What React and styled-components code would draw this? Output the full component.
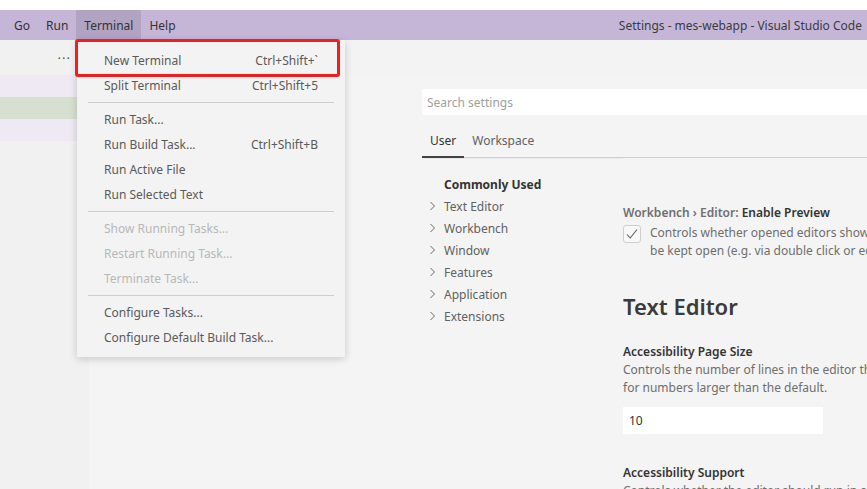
import styled, { createGlobalStyle } from "styled-components"

const GlobalStyle = createGlobalStyle`
  html, body {
    margin: 0;
    padding: 0;
    background: #ffffff;
  }
  body {
    font-family: "Noto Sans", "Open Sans", sans-serif;
    font-size: 12px;
    color: #333333;
  }
`

const Window = styled.div`
  position: relative;
  width: 867px;
  height: 489px;
  overflow: hidden;
  padding-top: 10px;
  box-sizing: border-box;
  display: flex;
  flex-direction: column;
`

const TitleBar = styled.div`
  height: 30px;
  background: #c5b6d8;
  display: flex;
  align-items: stretch;
  padding-left: 6px;
  flex-shrink: 0;
`

const MenuEntry = styled.div`
  display: flex;
  align-items: center;
  padding: 0 8px;
  color: #333333;
  font-size: 12px;
  background: ${(p) => (p.$active ? "#b1a3c2" : "transparent")};
`

const Title = styled.div`
  margin-left: auto;
  display: flex;
  align-items: center;
  padding-right: 5px;
  font-size: 12px;
  color: #3b3b3b;
`

const Body = styled.div`
  flex: 1;
  display: flex;
  min-height: 0;
`

const Sidebar = styled.div`
  width: 89px;
  background: #f1f1f1;
  display: flex;
  flex-direction: column;
  flex-shrink: 0;
`

const SidebarHeader = styled.div`
  height: 35px;
  display: flex;
  justify-content: flex-end;
  align-items: center;
  padding-right: 18px;
  color: #555555;
  font-size: 13px;
  letter-spacing: 1px;
`

const TreeRow = styled.div`
  height: 22px;
  background: ${(p) => p.$color};
`

const Editor = styled.div`
  flex: 1;
  background: #f4f4f4;
  display: flex;
  flex-direction: column;
  min-width: 0;
`

const TabStrip = styled.div`
  height: 35px;
  background: #f3f3f3;
  flex-shrink: 0;
`

const Settings = styled.div`
  padding-left: 333px;
  padding-top: 14px;
  display: flex;
  flex-direction: column;
`

const SearchBox = styled.div`
  height: 26px;
  background: #ffffff;
  display: flex;
  align-items: center;
  padding-left: 5px;
  color: #a0a0a0;
  font-size: 12px;
`

const Tabs = styled.div`
  margin-top: 10px;
  height: 32px;
  display: flex;
  border-bottom: 1px solid #cfcfcf;
`

const Tab = styled.div`
  display: flex;
  align-items: center;
  padding: 0 8px;
  font-size: 12px;
  color: ${(p) => (p.$active ? "#333333" : "#616161")};
  border-bottom: 2px solid ${(p) => (p.$active ? "#424242" : "transparent")};
  margin-bottom: -1px;
`

const SettingsBody = styled.div`
  display: flex;
`

const Toc = styled.div`
  width: 201px;
  flex-shrink: 0;
  padding-top: 14px;
  border-top: 1px solid #eaeaea;
`

const TocItem = styled.div`
  height: 22px;
  display: flex;
  align-items: center;
  padding-left: ${(p) => (p.$bold ? "22px" : "6px")};
  gap: 7px;
  font-size: 12px;
  font-weight: ${(p) => (p.$bold ? 700 : 400)};
  color: ${(p) => (p.$bold ? "#333333" : "#616161")};
`

const Content = styled.div`
  padding-top: 44px;
  white-space: nowrap;
  display: flex;
  flex-direction: column;
`

const SettingTitle = styled.div`
  font-size: 12px;
  font-weight: 600;
  color: #333333;
  height: 20px;
  display: flex;
  align-items: center;
`

const Category = styled.span`
  color: #6f6f6f;
  white-space: pre;
`

const CheckRow = styled.div`
  display: flex;
  gap: 9px;
  margin-top: 2px;
`

const CheckBox = styled.div`
  width: 16px;
  height: 16px;
  border: 1px solid #cecece;
  border-radius: 3px;
  background: #f8f8f8;
  flex-shrink: 0;
  margin-top: 1px;
  display: flex;
  align-items: center;
  justify-content: center;
`

const Description = styled.div`
  font-size: 12px;
  line-height: 18px;
  color: #6e6e6e;
`

const SectionHeading = styled.div`
  margin-top: 29px;
  font-size: 22px;
  font-weight: 600;
  color: #3b3b3b;
  height: 34px;
  display: flex;
  align-items: center;
`

const Setting = styled.div`
  margin-top: ${(p) => p.$gap}px;
  display: flex;
  flex-direction: column;
`

const NumberInput = styled.div`
  margin-top: 10px;
  width: 194px;
  height: 27px;
  background: #ffffff;
  display: flex;
  align-items: center;
  padding-left: 6px;
  font-size: 12px;
  color: #333333;
`

const Dropdown = styled.div`
  position: absolute;
  left: 77px;
  top: 40px;
  width: 268px;
  background: #f3f3f3;
  box-shadow: 0 2px 8px rgba(0, 0, 0, 0.18);
  padding: 8px 0 7px;
  z-index: 5;
`

const Item = styled.div`
  height: 25px;
  display: flex;
  align-items: center;
  justify-content: space-between;
  padding: 0 27px;
  font-size: 12px;
  color: ${(p) => (p.$disabled ? "#b8b8b8" : "#5a5a5a")};
`

const Separator = styled.div`
  height: 1px;
  background: #cdcdcd;
  margin: 4px 11px;
`

const Highlight = styled.div`
  position: absolute;
  left: 75px;
  top: 39px;
  width: 265px;
  height: 38px;
  box-sizing: border-box;
  border: 3px solid #f21d1d;
  border-radius: 3px;
  z-index: 6;
`

const Chevron = () => (
  <svg width="9" height="10" viewBox="0 0 9 10">
    <path d="M2.5 1 L6.5 5 L2.5 9" fill="none" stroke="#6a6a6a" strokeWidth="1" />
  </svg>
)

const Check = () => (
  <svg width="14" height="14" viewBox="0 0 14 14">
    <path d="M2 7.5 L5.2 11 L12 2.5" fill="none" stroke="#5f5f5f" strokeWidth="1.1" />
  </svg>
)

const menuGroups = [
  [
    { label: "New Terminal", key: "Ctrl+Shift+`" },
    { label: "Split Terminal", key: "Ctrl+Shift+5" },
  ],
  [
    { label: "Run Task..." },
    { label: "Run Build Task...", key: "Ctrl+Shift+B" },
    { label: "Run Active File" },
    { label: "Run Selected Text" },
  ],
  [
    { label: "Show Running Tasks...", disabled: true },
    { label: "Restart Running Task...", disabled: true },
    { label: "Terminate Task...", disabled: true },
  ],
  [{ label: "Configure Tasks..." }, { label: "Configure Default Build Task..." }],
]

const tocItems = ["Text Editor", "Workbench", "Window", "Features", "Application", "Extensions"]

function App() {
  return (
    <>
      <GlobalStyle />
      <Window>
        <TitleBar>
          <MenuEntry>Go</MenuEntry>
          <MenuEntry>Run</MenuEntry>
          <MenuEntry $active>Terminal</MenuEntry>
          <MenuEntry>Help</MenuEntry>
          <Title>Settings - mes-webapp - Visual Studio Code</Title>
        </TitleBar>
        <Body>
          <Sidebar>
            <SidebarHeader>···</SidebarHeader>
            <TreeRow $color="#eee9f2" />
            <TreeRow $color="#d7e0d0" />
            <TreeRow $color="#eee9f2" />
          </Sidebar>
          <Editor>
            <TabStrip />
            <Settings>
              <SearchBox>Search settings</SearchBox>
              <Tabs>
                <Tab $active>User</Tab>
                <Tab>Workspace</Tab>
              </Tabs>
              <SettingsBody>
                <Toc>
                  <TocItem $bold>Commonly Used</TocItem>
                  {tocItems.map((t) => (
                    <TocItem key={t}>
                      <Chevron />
                      {t}
                    </TocItem>
                  ))}
                </Toc>
                <Content>
                  <SettingTitle>
                    <Category>Workbench › Editor: </Category>Enable Preview
                  </SettingTitle>
                  <CheckRow>
                    <CheckBox>
                      <Check />
                    </CheckBox>
                    <Description>
                      <div>Controls whether opened editors show as preview editors.</div>
                      <div>be kept open (e.g. via double click or editing).</div>
                    </Description>
                  </CheckRow>
                  <SectionHeading>Text Editor</SectionHeading>
                  <Setting $gap={18}>
                    <SettingTitle>Accessibility Page Size</SettingTitle>
                    <Description>
                      <div>Controls the number of lines in the editor that can be read.</div>
                      <div>for numbers larger than the default.</div>
                    </Description>
                    <NumberInput>10</NumberInput>
                  </Setting>
                  <Setting $gap={28}>
                    <SettingTitle>Accessibility Support</SettingTitle>
                    <Description>
                      <div>Controls whether the editor should run in a mode for screen readers.</div>
                    </Description>
                  </Setting>
                </Content>
              </SettingsBody>
            </Settings>
          </Editor>
        </Body>
        <Dropdown>
          {menuGroups.map((group, gi) => (
            <div key={gi}>
              {gi > 0 && <Separator />}
              {group.map((it) => (
                <Item key={it.label} $disabled={it.disabled}>
                  <span>{it.label}</span>
                  {it.key && <span>{it.key}</span>}
                </Item>
              ))}
            </div>
          ))}
        </Dropdown>
        <Highlight />
      </Window>
    </>
  )
}

export default App
